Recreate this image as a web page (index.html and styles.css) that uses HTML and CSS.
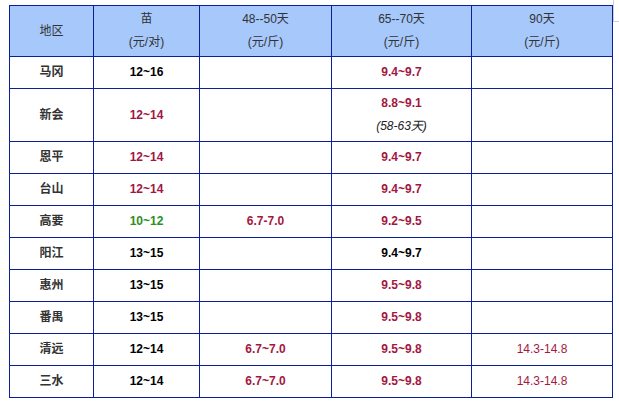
FILE: index.html
```html
<!DOCTYPE html>
<html lang="zh">
<head>
<meta charset="utf-8">
<title>价格表</title>
<link rel="stylesheet" href="styles.css">
</head>
<body>
<div class="corner"></div>
<table class="price">
  <colgroup>
    <col class="c1"><col class="c2"><col class="c3"><col class="c4"><col class="c5">
  </colgroup>
  <thead>
    <tr>
      <th>地区</th>
      <th>苗<br>(元/对)</th>
      <th>48--50天<br>(元/斤)</th>
      <th>65--70天<br>(元/斤)</th>
      <th>90天<br>(元/斤)</th>
    </tr>
  </thead>
  <tbody>
    <tr><td class="name">马冈</td><td class="b">12~16</td><td></td><td class="r">9.4~9.7</td><td></td></tr>
    <tr class="tall"><td class="name">新会</td><td class="r">12~14</td><td></td><td><span class="r">8.8~9.1</span><br><span class="note">(58-63天)</span></td><td></td></tr>
    <tr><td class="name">恩平</td><td class="r">12~14</td><td></td><td class="r">9.4~9.7</td><td></td></tr>
    <tr><td class="name">台山</td><td class="r">12~14</td><td></td><td class="r">9.4~9.7</td><td></td></tr>
    <tr><td class="name">高要</td><td class="g">10~12</td><td class="r">6.7-7.0</td><td class="r">9.2~9.5</td><td></td></tr>
    <tr><td class="name">阳江</td><td class="b">13~15</td><td></td><td class="b">9.4~9.7</td><td></td></tr>
    <tr><td class="name">惠州</td><td class="b">13~15</td><td></td><td class="r">9.5~9.8</td><td></td></tr>
    <tr><td class="name">番禺</td><td class="b">13~15</td><td></td><td class="r">9.5~9.8</td><td></td></tr>
    <tr><td class="name">清远</td><td class="b">12~14</td><td class="r">6.7~7.0</td><td class="r">9.5~9.8</td><td class="rn">14.3-14.8</td></tr>
    <tr><td class="name">三水</td><td class="b">12~14</td><td class="r">6.7~7.0</td><td class="r">9.5~9.8</td><td class="rn">14.3-14.8</td></tr>
  </tbody>
</table>
</body>
</html>
```

FILE: styles.css
```css
html, body {
  margin: 0;
  background: #ffffff;
}
body {
  padding: 5px 0 0 9px;
  font-family: "Liberation Sans", Arial, "Noto Sans CJK SC", sans-serif;
  font-size: 12px;
  color: #333333;
}
.corner {
  position: absolute;
  top: 0;
  left: 613px;
  width: 8px;
  height: 21px;
  border-left: 1px solid #cfcfcf;
  border-bottom: 1px solid #cfcfcf;
}
.price {
  border-collapse: collapse;
  table-layout: fixed;
  width: 603px;
}
.c1 { width: 84px; }
.c2 { width: 106px; }
.c3 { width: 132px; }
.c4 { width: 140px; }
.c5 { width: 141px; }
.price th,
.price td {
  border: 1px solid #0c1f9a;
  text-align: center;
  vertical-align: middle;
  padding: 0;
  line-height: 23px;
}
.price th {
  background: #a6c8fb;
  font-weight: normal;
  height: 50px;
  color: #333333;
}
.price td {
  height: 31px;
  font-weight: bold;
}
.price tr.tall td {
  height: 52px;
}
.name { color: #333333; }
.b { color: #000000; }
.r { color: #a3173f; font-weight: bold; }
.rn { color: #a3173f; font-weight: normal !important; }
.g { color: #2e8f22; }
.note {
  font-style: italic;
  font-weight: normal;
  color: #222222;
}
```
